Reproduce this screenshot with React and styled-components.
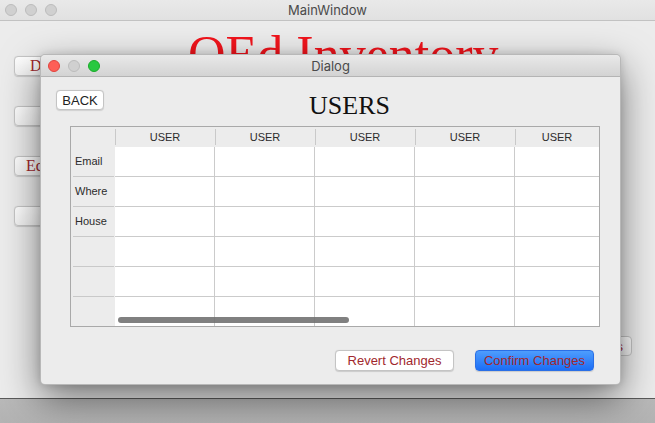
import React from "react";
import styled, { createGlobalStyle } from "styled-components";

const GlobalStyle = createGlobalStyle`
  html, body {
    margin: 0;
    padding: 0;
    background: #ececec;
  }
  * {
    box-sizing: border-box;
  }
`;

const columns = ["USER", "USER", "USER", "USER", "USER"];
const rows = ["Email", "Where", "House", "", "", ""];

const App = () => {
  return (
    <Page>
      <GlobalStyle />
      <TitleBar>
        <Lights>
          <Light />
          <Light />
          <Light />
        </Lights>
        <WindowTitle>MainWindow</WindowTitle>
      </TitleBar>
      <MainBody>
        <SideColumn>
          <SideButton $inset={15}>D</SideButton>
          <SideButton />
          <SideButton $inset={11}>Eq</SideButton>
          <SideButton />
        </SideColumn>
        <AppHeading>QEd Inventory</AppHeading>
        <CornerColumn>
          <CornerButton>s</CornerButton>
        </CornerColumn>

        <Dialog>
          <TitleBar $dialog>
            <Lights>
              <Light $color="#fe5f57" $edge="#e0443e" />
              <Light />
              <Light $color="#28c840" $edge="#1aab29" />
            </Lights>
            <WindowTitle>Dialog</WindowTitle>
          </TitleBar>
          <DialogBody>
            <HeaderRow>
              <BackButton>BACK</BackButton>
              <DialogHeading>USERS</DialogHeading>
            </HeaderRow>
            <Table>
              <CornerCell />
              {columns.map((c, i) => (
                <ColumnHead key={i}>{c}</ColumnHead>
              ))}
              {rows.map((r, ri) => (
                <React.Fragment key={ri}>
                  <RowHead $last={ri === rows.length - 1}>{r}</RowHead>
                  {columns.map((c, ci) => (
                    <Cell
                      key={ci}
                      $lastCol={ci === columns.length - 1}
                      $lastRow={ri === rows.length - 1}
                    />
                  ))}
                </React.Fragment>
              ))}
              <ScrollThumb />
            </Table>
            <ButtonRow>
              <PushButton>Revert Changes</PushButton>
              <PushButton $primary>Confirm Changes</PushButton>
            </ButtonRow>
          </DialogBody>
        </Dialog>
      </MainBody>
      <StatusStrip />
    </Page>
  );
};

export default App;

const Page = styled.div`
  width: 655px;
  height: 423px;
  display: flex;
  flex-direction: column;
  overflow: hidden;
  background: #ececec;
`;

const TitleBar = styled.div`
  height: ${(p) => (p.$dialog ? "22px" : "21px")};
  flex-shrink: 0;
  display: grid;
  grid-template-columns: 1fr auto 1fr;
  align-items: center;
  padding: 0 ${(p) => (p.$dialog ? "7px" : "5px")};
  border-bottom: 1px solid ${(p) => (p.$dialog ? "#b4b4b4" : "#c2c2c2")};
  background: ${(p) =>
    p.$dialog
      ? "linear-gradient(#e9e9e9, #d3d3d3)"
      : "linear-gradient(#e9e9e9, #e1e1e1)"};
  border-radius: ${(p) => (p.$dialog ? "5px 5px 0 0" : "0")};
`;

const Lights = styled.div`
  display: flex;
  gap: 8px;
`;

const Light = styled.span`
  width: 12px;
  height: 12px;
  border-radius: 50%;
  background: ${(p) => p.$color || "#d0d0d0"};
  border: 0.5px solid ${(p) => p.$edge || "#bcbcbc"};
`;

const WindowTitle = styled.div`
  font-family: "Inter", "Liberation Sans", sans-serif;
  font-size: 13px;
  color: #4a4a4a;
`;

const MainBody = styled.div`
  flex: 1;
  position: relative;
  display: grid;
  grid-template-columns: 124px 1fr auto;
  align-items: start;
`;

const SideColumn = styled.div`
  display: flex;
  flex-direction: column;
  gap: 30px;
  padding: 35px 0 0 14px;
`;

const SideButton = styled.button`
  width: 110px;
  height: 20px;
  padding: 0 0 0 ${(p) => p.$inset || 11}px;
  text-align: left;
  border: 1px solid #c6c6c6;
  border-radius: 4px;
  background: linear-gradient(#ffffff, #f3f3f3);
  box-shadow: 0 0.5px 1px rgba(0, 0, 0, 0.15);
  font-family: "Liberation Serif", serif;
  font-size: 16px;
  color: #a1282d;
`;

const AppHeading = styled.h1`
  margin: 8px 0 0 64px;
  font-family: "Liberation Serif", "Times New Roman", serif;
  font-weight: 400;
  font-size: 52px;
  line-height: 52px;
  color: #f2141c;
  white-space: nowrap;
`;

const CornerColumn = styled.div`
  align-self: end;
  padding: 0 23px 42px 0;
`;

const CornerButton = styled.button`
  width: 60px;
  height: 20px;
  padding: 0 8px 0 0;
  text-align: right;
  border: 1px solid #c6c6c6;
  border-radius: 4px;
  background: linear-gradient(#ffffff, #f3f3f3);
  font-family: "Liberation Sans", sans-serif;
  font-size: 13px;
  color: #a1282d;
`;

const Dialog = styled.div`
  position: absolute;
  left: 40px;
  top: 33px;
  width: 581px;
  height: 331px;
  display: flex;
  flex-direction: column;
  background: #ececec;
  border: 1px solid rgba(0, 0, 0, 0.22);
  border-radius: 5px;
  box-shadow: 0 14px 38px rgba(0, 0, 0, 0.5), 0 0 8px rgba(0, 0, 0, 0.14);
`;

const DialogBody = styled.div`
  flex: 1;
  display: flex;
  flex-direction: column;
  padding: 13px 25px 0 15px;
`;

const HeaderRow = styled.div`
  display: flex;
  align-items: flex-start;
`;

const BackButton = styled.button`
  width: 48px;
  height: 20px;
  padding: 0;
  border: 1px solid #c4c4c4;
  border-radius: 4px;
  background: #ffffff;
  box-shadow: 0 0.5px 1px rgba(0, 0, 0, 0.12);
  font-family: "Liberation Sans", sans-serif;
  font-size: 13px;
  color: #222;
`;

const DialogHeading = styled.h2`
  flex: 1;
  margin: 1px 0 0;
  text-align: center;
  font-family: "Liberation Serif", "Times New Roman", serif;
  font-weight: 400;
  font-size: 26px;
  line-height: 30px;
  color: #111;
`;

const Table = styled.div`
  position: relative;
  margin: 5px 0 0 14px;
  width: 530px;
  display: grid;
  grid-template-columns: 44px repeat(4, 100px) 84px;
  grid-template-rows: 20px repeat(5, 30px) 29px;
  border: 1px solid #a9a9a9;
  background: #ffffff;
  font-family: "Liberation Sans", sans-serif;
  font-size: 11px;
  color: #2b2b2b;
`;

const CornerCell = styled.div`
  background: #ececec;
`;

const ColumnHead = styled.div`
  position: relative;
  display: flex;
  align-items: center;
  justify-content: center;
  background: #ececec;

  &::before {
    content: "";
    position: absolute;
    left: 0;
    top: 2px;
    bottom: 2px;
    width: 1px;
    background: #c9c9c9;
  }
`;

const RowHead = styled.div`
  position: relative;
  display: flex;
  align-items: center;
  padding: 0 0 2px 4px;
  background: #ececec;

  &::after {
    content: "";
    display: ${(p) => (p.$last ? "none" : "block")};
    position: absolute;
    left: 2px;
    right: 1px;
    bottom: 0;
    height: 1px;
    background: #c9c9c9;
  }
`;

const Cell = styled.div`
  background: #ffffff;
  border-right: ${(p) => (p.$lastCol ? "none" : "1px solid #cbcbcb")};
  border-bottom: ${(p) => (p.$lastRow ? "none" : "1px solid #cbcbcb")};
`;

const ScrollThumb = styled.div`
  position: absolute;
  left: 47px;
  top: 190px;
  width: 231px;
  height: 6px;
  border-radius: 3px;
  background: rgba(110, 110, 110, 0.88);
`;

const ButtonRow = styled.div`
  display: flex;
  justify-content: flex-end;
  gap: 21px;
  margin: 23px 1px 0 0;
`;

const PushButton = styled.button`
  width: 119px;
  height: 21px;
  padding: 0;
  border-radius: 4px;
  font-family: "Liberation Sans", sans-serif;
  font-size: 13px;
  color: #a1282d;
  border: 1px solid ${(p) => (p.$primary ? "#2a6fe6" : "#c4c4c4")};
  background: ${(p) =>
    p.$primary ? "linear-gradient(#4e9dfd, #1c6ef6)" : "#ffffff"};
  box-shadow: 0 0.5px 1px rgba(0, 0, 0, 0.14);
`;

const StatusStrip = styled.div`
  height: 25px;
  flex-shrink: 0;
  border-top: 1px solid #5a5a5a;
  background: linear-gradient(#b9b9b9, #b3b3b3);
`;
